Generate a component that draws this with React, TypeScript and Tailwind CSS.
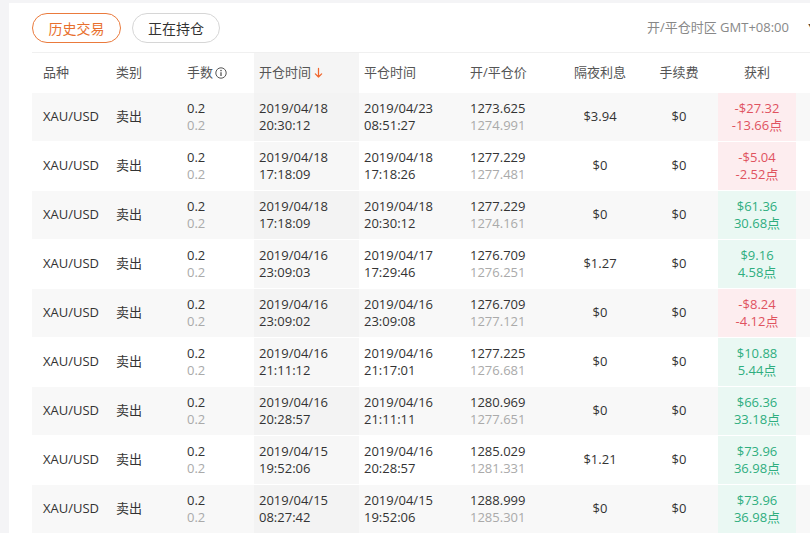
import React from 'react';

type Trade = {
  open: [string, string];
  close: [string, string];
  price: [string, string];
  swap: string;
  profit: [string, string];
  loss: boolean;
};

const trades: Trade[] = [
  { open: ['2019/04/18', '20:30:12'], close: ['2019/04/23', '08:51:27'], price: ['1273.625', '1274.991'], swap: '$3.94', profit: ['-$27.32', '-13.66点'], loss: true },
  { open: ['2019/04/18', '17:18:09'], close: ['2019/04/18', '17:18:26'], price: ['1277.229', '1277.481'], swap: '$0', profit: ['-$5.04', '-2.52点'], loss: true },
  { open: ['2019/04/18', '17:18:09'], close: ['2019/04/18', '20:30:12'], price: ['1277.229', '1274.161'], swap: '$0', profit: ['$61.36', '30.68点'], loss: false },
  { open: ['2019/04/16', '23:09:03'], close: ['2019/04/17', '17:29:46'], price: ['1276.709', '1276.251'], swap: '$1.27', profit: ['$9.16', '4.58点'], loss: false },
  { open: ['2019/04/16', '23:09:02'], close: ['2019/04/16', '23:09:08'], price: ['1276.709', '1277.121'], swap: '$0', profit: ['-$8.24', '-4.12点'], loss: true },
  { open: ['2019/04/16', '21:11:12'], close: ['2019/04/16', '21:17:01'], price: ['1277.225', '1276.681'], swap: '$0', profit: ['$10.88', '5.44点'], loss: false },
  { open: ['2019/04/16', '20:28:57'], close: ['2019/04/16', '21:11:11'], price: ['1280.969', '1277.651'], swap: '$0', profit: ['$66.36', '33.18点'], loss: false },
  { open: ['2019/04/15', '19:52:06'], close: ['2019/04/16', '20:28:57'], price: ['1285.029', '1281.331'], swap: '$1.21', profit: ['$73.96', '36.98点'], loss: false },
  { open: ['2019/04/15', '08:27:42'], close: ['2019/04/15', '19:52:06'], price: ['1288.999', '1285.301'], swap: '$0', profit: ['$73.96', '36.98点'], loss: false },
];

const COLS = 'grid grid-cols-[78px_72px_72px_105px_105px_96px_80px_78px_78px_40px]';

function InfoIcon() {
  return (
    <svg viewBox="0 0 12 12" className="ml-[2px] h-[12px] w-[12px]" fill="none">
      <circle cx="6" cy="6" r="5.2" stroke="#555" strokeWidth="1" />
      <circle cx="6" cy="3.6" r="0.8" fill="#555" />
      <path d="M6 5.2v3.8" stroke="#555" strokeWidth="1.3" />
    </svg>
  );
}

function DownArrow() {
  return (
    <svg viewBox="0 0 10 12" className="ml-[3px] h-[12px] w-[9px]" fill="none">
      <path d="M5 1v9.5M1.5 7l3.5 3.5L8.5 7" stroke="#f0672e" strokeWidth="1.4" strokeLinecap="round" strokeLinejoin="round" />
    </svg>
  );
}

// two stacked values; second line dark or muted
function Two({ a, b, muted }: { a: string; b: string; muted?: boolean }) {
  return (
    <div className="flex flex-col leading-[17px]">
      <span className="text-[#333]">{a}</span>
      <span className={muted ? 'text-[#aaa]' : 'text-[#333]'}>{b}</span>
    </div>
  );
}

export default function App() {
  return (
    <div className="h-[533px] w-[810px] overflow-hidden bg-[#f4f4f6] pl-[9px] pt-[3px] font-['Open_Sans','Noto_Sans_CJK_SC',sans-serif] text-[13px] text-[#333]">
      <div className="h-full w-[900px] bg-white pl-[23px]">
        {/* tabs + timezone */}
        <div className="flex h-[49px] w-[785px] items-center">
          <button className="mt-[1px] h-[30px] w-[89px] rounded-full border border-[#ea7a3c] text-[14px] text-[#e8702e]">
            历史交易
          </button>
          <button className="ml-[11px] mt-[1px] h-[30px] w-[88px] rounded-full border border-[#d6d6d6] text-[14px] text-[#333]">
            正在持仓
          </button>
          <div className="ml-auto flex items-center text-[#888]">
            开/平仓时区 GMT+08:00
            <span className="ml-[19px] text-[9px] text-[#444]">▼</span>
          </div>
        </div>

        {/* header */}
        <div className={`${COLS} h-[41px] border-t border-[#f0f0f0] text-[#555]`}>
          <div className="flex items-center pl-[11px]">品种</div>
          <div className="flex items-center pl-[6px]">类别</div>
          <div className="flex items-center pl-[5px]">
            手数
            <InfoIcon />
          </div>
          <div className="flex items-center bg-[#f5f5f5] pl-[5px]">
            开仓时间
            <DownArrow />
          </div>
          <div className="flex items-center pl-[5px]">平仓时间</div>
          <div className="flex items-center pl-[6px]">开/平仓价</div>
          <div className="flex items-center justify-center">隔夜利息</div>
          <div className="flex items-center justify-center">手续费</div>
          <div className="flex items-center justify-center">获利</div>
          <div />
        </div>

        {/* rows */}
        {trades.map((t, i) => {
          const stripe = i % 2 === 0 ? 'bg-[#f8f8f8]' : 'bg-white';
          return (
            <div key={i} className={`${COLS} h-[49px] border-b border-white ${stripe}`}>
              <div className="flex items-center pl-[11px]">XAU/USD</div>
              <div className="flex items-center pl-[6px]">卖出</div>
              <div className="flex items-center pl-[5px]">
                <Two a="0.2" b="0.2" muted />
              </div>
              <div className={`flex items-center pl-[5px] ${i % 2 === 0 ? 'bg-[#f3f3f3]' : 'bg-[#f7f7f7]'}`}>
                <Two a={t.open[0]} b={t.open[1]} />
              </div>
              <div className="flex items-center pl-[5px]">
                <Two a={t.close[0]} b={t.close[1]} />
              </div>
              <div className="flex items-center pl-[6px]">
                <Two a={t.price[0]} b={t.price[1]} muted />
              </div>
              <div className="flex items-center justify-center">{t.swap}</div>
              <div className="flex items-center justify-center">$0</div>
              <div
                className={`flex flex-col items-center justify-center leading-[17px] ${
                  t.loss ? 'bg-[#fdedef] text-[#e0535f]' : 'bg-[#eaf8f3] text-[#2fae7f]'
                }`}
              >
                <span>{t.profit[0]}</span>
                <span>{t.profit[1]}</span>
              </div>
              <div />
            </div>
          );
        })}
      </div>
    </div>
  );
}
